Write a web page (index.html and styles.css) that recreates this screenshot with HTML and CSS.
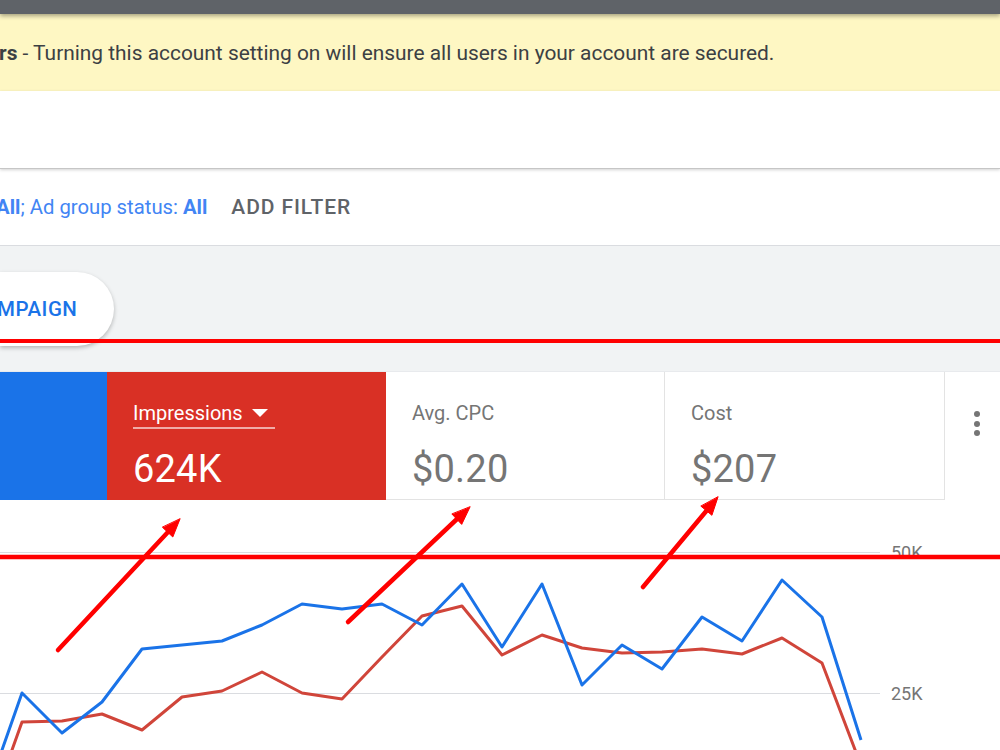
FILE: index.html
```html
<!DOCTYPE html>
<html>
<head>
<meta charset="utf-8">
<link rel="stylesheet" href="styles.css">
</head>
<body>
<div class="page">
  <div class="topbar"></div>
  <div class="banner"><span class="banner-text"><b>rs</b> - Turning this account setting on will ensure all users in your account are secured.</span></div>
  <div class="header-space"></div>
  <div class="filterbar">
    <span class="filters"><b>All</b>; Ad group status: <b>All</b></span>
    <span class="add-filter">ADD FILTER</span>
  </div>
  <div class="tabs-area">
    <div class="pill">MPAIGN</div>
  </div>
  <div class="scorecards">
    <div class="card card-blue"></div>
    <div class="card card-red">
      <div class="card-label"><span class="label-u">Impressions <span class="caret"></span></span></div>
      <div class="card-value">624K</div>
    </div>
    <div class="card card-white">
      <div class="card-label">Avg. CPC</div>
      <div class="card-value">$0.20</div>
    </div>
    <div class="card card-white card-last">
      <div class="card-label">Cost</div>
      <div class="card-value">$207</div>
    </div>
    <div class="kebab">
      <span class="dot"></span><span class="dot"></span><span class="dot"></span>
    </div>
  </div>
  <div class="chart">
    <svg class="chart-svg" width="1000" height="250" viewBox="0 500 1000 250">
      <line x1="0" y1="552.5" x2="880" y2="552.5" stroke="#dadce0" stroke-width="1"/>
      <line x1="0" y1="693.5" x2="880" y2="693.5" stroke="#dadce0" stroke-width="1"/>
      <text x="891" y="559" class="axis">50K</text>
      <text x="891" y="700" class="axis">25K</text>
      <polyline fill="none" stroke="#d0453a" stroke-width="3" stroke-linejoin="round"
        points="-18,834 22,722 62,721 102,714 142,730 182,697 222,691 262,672 302,693 342,699 382,657 422,616 462,606 502,655 542,635 582,648 622,653 662,652 702,649 742,654 782,638 822,663 862,768"/>
      <polyline fill="none" stroke="#1a73e8" stroke-width="3" stroke-linejoin="round"
        points="-18,807 22,693 62,733 102,702 142,649 182,645 222,641 262,625 302,604 342,609 382,604 422,625 462,584 502,647 542,584 582,685 622,645 662,669 702,617 742,641 782,580 822,617 861,740"/>
    </svg>
  </div>
  <svg class="annotations" width="1000" height="750" viewBox="0 0 1000 750">
    <line x1="0" y1="341" x2="1000" y2="341" stroke="#ff0000" stroke-width="4"/>
    <line x1="0" y1="557" x2="1000" y2="557" stroke="#ff0000" stroke-width="4.5"/>
    <g stroke="#ff0000" stroke-width="4.5" stroke-linecap="round" fill="#ff0000">
      <line x1="58" y1="650" x2="168" y2="532"/>
      <polygon points="180,519 172.8,537 162.6,527.4" stroke-width="1" stroke-linejoin="round"/>
      <line x1="348" y1="622" x2="457" y2="519"/>
      <polygon points="470,507 461.7,524.4 452.1,514.2" stroke-width="1" stroke-linejoin="round"/>
      <line x1="643" y1="587" x2="706.5" y2="510.8"/>
      <polygon points="718,497 711.9,515.3 701.1,506.3" stroke-width="1" stroke-linejoin="round"/>
    </g>
  </svg>
</div>
</body>
</html>
```

FILE: styles.css
```css
* { box-sizing: border-box; }
html, body {
  margin: 0;
  padding: 0;
  background: #ffffff;
}
body {
  font-family: Roboto, "Liberation Sans", Arial, sans-serif;
  width: 1000px;
  height: 750px;
  overflow: hidden;
}
.page {
  position: relative;
  width: 1000px;
  height: 750px;
  overflow: hidden;
}
.topbar {
  height: 14px;
  background: #5f6368;
  position: relative;
  z-index: 2;
  box-shadow: 0 2px 4px rgba(0, 0, 0, 0.35);
}
.banner {
  height: 77px;
  background: #fef7c3;
  display: flex;
  align-items: center;
  font-size: 20.9px;
  color: #3c4043;
}
.banner-text {
  margin-left: -1px;
  white-space: nowrap;
}
.banner-text b { font-weight: 700; }
.header-space {
  height: 78px;
  background: #ffffff;
  border-bottom: 1px solid #c6c6c6;
  box-shadow: 0 1px 3px rgba(0, 0, 0, 0.18);
  position: relative;
  z-index: 1;
}
.filterbar {
  height: 77px;
  background: #ffffff;
  border-bottom: 1px solid #dadce0;
  display: flex;
  align-items: center;
  gap: 24px;
  font-size: 20.3px;
  white-space: nowrap;
}
.filters {
  color: #4285f4;
  margin-left: -4px;
}
.filters b { font-weight: 700; color: #4285f4; }
.add-filter {
  color: #5f6368;
  font-weight: 500;
  font-size: 21px;
  letter-spacing: 0.9px;
}
.tabs-area {
  height: 126px;
  background: #f1f3f4;
  padding-top: 26px;
  border-bottom: 1px solid #e8eaed;
}
.pill {
  width: 114px;
  height: 74px;
  background: #ffffff;
  border-radius: 0 37px 37px 0;
  box-shadow: 0 2px 4px rgba(0, 0, 0, 0.25);
  display: flex;
  align-items: center;
  color: #1a73e8;
  font-weight: 500;
  font-size: 20.5px;
  letter-spacing: 0.5px;
  padding-left: 0;
  text-indent: -3px;
}
.scorecards {
  display: flex;
  height: 128px;
  background: #ffffff;
}
.card {
  height: 128px;
  padding: 29px 26px 0 26px;
}
.card-blue {
  width: 107px;
  background: #1a73e8;
}
.card-red {
  width: 279px;
  background: #d93025;
  color: #ffffff;
}
.card-white {
  width: 279px;
  border-right: 1px solid #e3e3e3;
  border-bottom: 1px solid #e3e3e3;
  color: #757575;
}
.card-last { width: 280px; }
.card-label {
  font-size: 20px;
  line-height: 24px;
  height: 30px;
  white-space: nowrap;
}
.card-white .card-label { color: #757575; }
.label-u {
  display: inline-block;
  border-bottom: 2px solid rgba(255, 255, 255, 0.6);
  padding-right: 7px;
  padding-bottom: 2px;
}
.caret {
  display: inline-block;
  width: 0;
  height: 0;
  border-left: 8px solid transparent;
  border-right: 8px solid transparent;
  border-top: 8px solid #ffffff;
  vertical-align: middle;
  margin-left: 4px;
  margin-top: -4px;
}
.card-value {
  font-size: 38px;
  line-height: 44px;
  margin-top: 16px;
  letter-spacing: 0.2px;
}
.card-white .card-value { color: #757575; }
.kebab {
  flex: 1;
  display: flex;
  flex-direction: column;
  align-items: center;
  padding-top: 39px;
  padding-left: 8px;
  gap: 3.5px;
}
.dot {
  width: 6px;
  height: 6px;
  border-radius: 50%;
  background: #757575;
}
.chart {
  height: 250px;
  background: #ffffff;
}
.chart-svg { display: block; }
.axis {
  font-family: Roboto, "Liberation Sans", Arial, sans-serif;
  font-size: 18px;
  fill: #757575;
}
.annotations {
  position: absolute;
  left: 0;
  top: 0;
  pointer-events: none;
  z-index: 5;
}
```
